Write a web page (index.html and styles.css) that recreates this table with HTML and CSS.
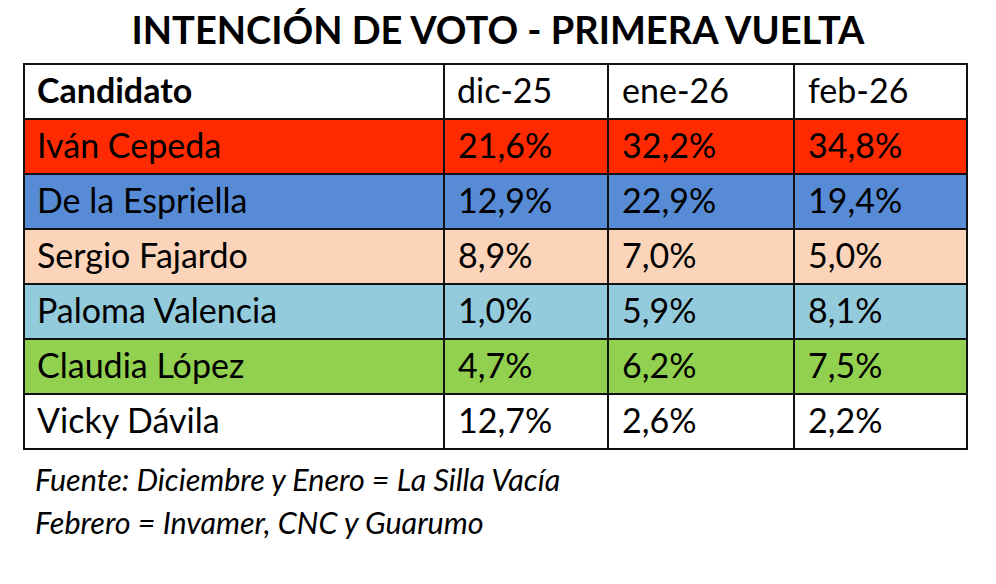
FILE: index.html
```html
<!DOCTYPE html>
<html lang="es">
<head>
<meta charset="utf-8">
<title>Intención de voto - Primera vuelta</title>
<link rel="stylesheet" href="styles.css">
</head>
<body>
<h1 class="title">INTENCIÓN DE VOTO - PRIMERA VUELTA</h1>
<table class="poll">
  <colgroup>
    <col class="c-name"><col class="c-m1"><col class="c-m2"><col class="c-m3">
  </colgroup>
  <thead>
    <tr class="head"><th>Candidato</th><td>dic-25</td><td>ene-26</td><td>feb-26</td></tr>
  </thead>
  <tbody>
    <tr class="r-red"><td>Iván Cepeda</td><td>21,6%</td><td>32,2%</td><td>34,8%</td></tr>
    <tr class="r-blue"><td>De la Espriella</td><td>12,9%</td><td>22,9%</td><td>19,4%</td></tr>
    <tr class="r-peach"><td>Sergio Fajardo</td><td>8,9%</td><td>7,0%</td><td>5,0%</td></tr>
    <tr class="r-sky"><td>Paloma Valencia</td><td>1,0%</td><td>5,9%</td><td>8,1%</td></tr>
    <tr class="r-green"><td>Claudia López</td><td>4,7%</td><td>6,2%</td><td>7,5%</td></tr>
    <tr class="r-white"><td>Vicky Dávila</td><td>12,7%</td><td>2,6%</td><td>2,2%</td></tr>
  </tbody>
</table>
<div class="source">
  <p>Fuente: Diciembre y Enero = La Silla Vacía</p>
  <p>Febrero = Invamer, CNC y Guarumo</p>
</div>
</body>
</html>
```

FILE: styles.css
```css
html, body {
  margin: 0;
  padding: 0;
  background: #ffffff;
}
body {
  font-family: Lato, "Open Sans", "Liberation Sans", sans-serif;
  color: #000;
  width: 996px;
  height: 584px;
  overflow: hidden;
}
.title {
  margin: 0;
  height: 63px;
  line-height: 58px;
  text-align: center;
  font-size: 38px;
  font-weight: 700;
}
.poll {
  margin-left: 23px;
  width: 945px;
  border-collapse: collapse;
  table-layout: fixed;
  border: 2px solid #111;
}
.c-name { width: 420px; }
.c-m1 { width: 164px; }
.c-m2 { width: 186px; }
.c-m3 { width: 173px; }
.poll th, .poll td {
  border: 2px solid #111;
  height: 55px;
  padding: 0 0 5px 12px;
  text-align: left;
  font-size: 34px;
  font-weight: 400;
  white-space: nowrap;
  box-sizing: border-box;
}
.poll td + td { padding-left: 13px; }
.poll th { font-weight: 700; }
.head { background: #fff; }
.r-red { background: #ff2a00; }
.r-blue { background: #578bd5; }
.r-peach { background: #fbd4b9; }
.r-sky { background: #93cbdc; }
.r-green { background: #92d050; }
.r-white { background: #fff; }
.source {
  padding: 8px 0 0 35px;
}
.source p {
  margin: 0;
  font-style: italic;
  font-size: 30.5px;
  line-height: 43px;
}
```
